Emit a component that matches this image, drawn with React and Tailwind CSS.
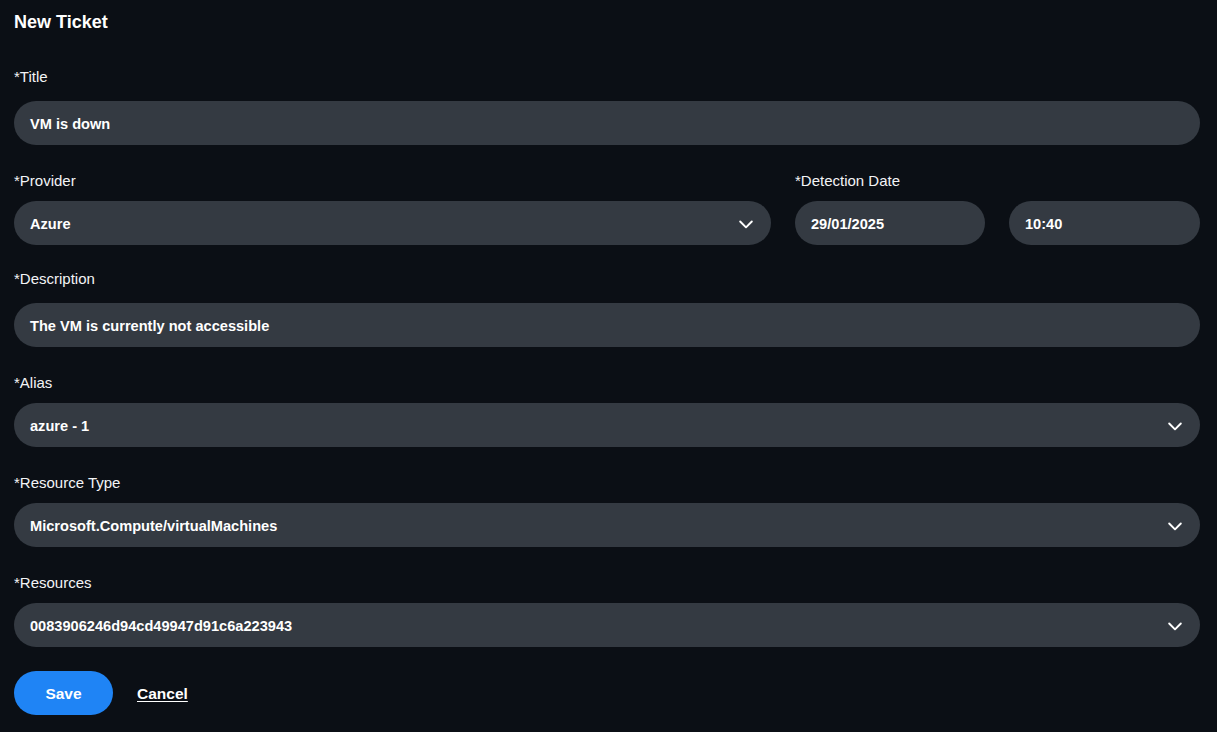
import React from 'react';

const Chevron = () => (
    <svg width="20" height="20" viewBox="0 0 24 24" fill="none" stroke="currentColor" strokeWidth="2.3" strokeLinecap="round" strokeLinejoin="round">
        <polyline points="5 9 12 16 19 9" />
    </svg>
);

const Label = ({ children, wide }) => (
    <label className={wide ? 'block text-[15px] leading-5 text-gray-100 mb-[14px]' : 'block text-[15px] leading-5 text-gray-100 mb-[10px]'}>{children}</label>
);

const Field = ({ value, select }) => (
    <div className="h-11 w-full rounded-full bg-[#343a42] flex items-center justify-between pl-4 pr-[15px]">
        <span className="pt-[3px] text-[14.6px] font-bold text-white">{value}</span>
        {select && <span className="pt-[1px] text-white"><Chevron /></span>}
    </div>
);

const App = () => {
    return (
        <div className="min-h-screen bg-[#0b0f15] pl-[14px] pr-[17px] pt-[10px] pb-6" style={{ fontFamily: '"Liberation Sans", Arial, sans-serif' }}>
            <h1 className="text-[18px] leading-6 font-bold text-white">New Ticket</h1>

            <div className="mt-[33px]">
                <Label wide>*Title</Label>
                <Field value="VM is down" />
            </div>

            <div className="mt-[26px] flex gap-6">
                <div className="flex-1">
                    <Label>*Provider</Label>
                    <Field value="Azure" select />
                </div>
                <div className="w-[405px]">
                    <Label>*Detection Date</Label>
                    <div className="flex gap-6">
                        <div className="w-[190px]"><Field value="29/01/2025" /></div>
                        <div className="flex-1"><Field value="10:40" /></div>
                    </div>
                </div>
            </div>

            <div className="mt-[24px]">
                <Label wide>*Description</Label>
                <Field value="The VM is currently not accessible" />
            </div>

            <div className="mt-[26px]">
                <Label>*Alias</Label>
                <Field value="azure - 1" select />
            </div>

            <div className="mt-[26px]">
                <Label>*Resource Type</Label>
                <Field value="Microsoft.Compute/virtualMachines" select />
            </div>

            <div className="mt-[26px]">
                <Label>*Resources</Label>
                <Field value="0083906246d94cd49947d91c6a223943" select />
            </div>

            <div className="mt-6 flex items-center gap-6">
                <button className="h-11 w-[99px] pt-[2px] rounded-full bg-[#1f84f5] text-white text-[15.5px] font-bold">Save</button>
                <button className="pt-[2px] text-white text-[15.5px] font-bold underline underline-offset-2">Cancel</button>
            </div>
        </div>
    );
};

export default App;
